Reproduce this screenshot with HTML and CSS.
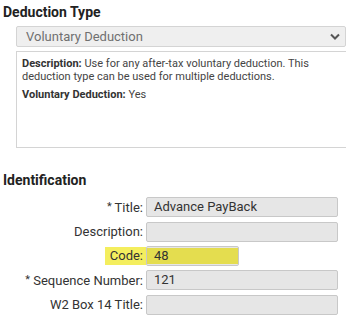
FILE: index.html
```html
<!DOCTYPE html>
<html>
<head>
  <meta charset="UTF-8">
  <title>Deduction</title>
  <link rel="stylesheet" href="styles.css">
</head>
<body>
  <h2 class="section-title">Deduction Type</h2>
  <div class="type-block">
    <div class="select-box">
      <span>Voluntary Deduction</span>
      <svg class="chevron" width="10" height="7" viewBox="0 0 10 7"><path d="M1 1.5 L5 5.5 L9 1.5" fill="none" stroke="#555" stroke-width="2"/></svg>
    </div>
    <div class="desc-box">
      <p><b>Description:</b> Use for any after-tax voluntary deduction. This deduction type can be used for multiple deductions.</p>
      <p><b>Voluntary Deduction:</b> Yes</p>
    </div>
  </div>

  <h2 class="section-title ident">Identification</h2>
  <div class="form-grid">
    <label><span class="req">*</span> Title:</label>
    <div class="field">Advance PayBack</div>

    <label>Description:</label>
    <div class="field"></div>

    <label class="marked"><span>Code:</span></label>
    <div class="field short marked">48</div>

    <label><span class="req">*</span> Sequence Number:</label>
    <div class="field">121</div>

    <label>W2 Box 14 Title:</label>
    <div class="field"></div>
  </div>
</body>
</html>
```

FILE: styles.css
```css
body {
  font-family: Roboto, Arial, sans-serif;
  margin: 0;
  padding: 0 0 0 3px;
  background: white;
  color: #333;
  overflow: hidden;
}
.section-title {
  font-size: 14px;
  line-height: 17px;
  font-weight: bold;
  color: #222;
  margin: 4px 0 0 0;
}
.section-title.ident {
  margin-top: 24px;
}
.type-block {
  margin-left: 13px;
}
.select-box {
  margin-top: 5px;
  width: 319px;
  height: 19px;
  border: 1px solid #d4d4d4;
  border-radius: 2px;
  background: #efefef;
  color: #707070;
  font-size: 13px;
  line-height: 19px;
  padding-left: 9px;
  display: flex;
  align-items: center;
  justify-content: space-between;
  box-sizing: content-box;
}
.chevron {
  margin-right: 5px;
}
.desc-box {
  margin-top: 4px;
  width: 340px;
  height: 90px;
  border: 1px solid #d4d4d4;
  padding: 5px 5px 0 5px;
  font-size: 11px;
  line-height: 13px;
  color: #444;
}
.desc-box p {
  margin: 0 0 5px 0;
  width: 296px;
}
.desc-box b {
  color: #333;
}
.form-grid {
  margin-top: 8px;
  display: grid;
  grid-template-columns: 143px 192px;
  row-gap: 4px;
  font-size: 13px;
}
.form-grid label {
  text-align: right;
  line-height: 20px;
  padding-right: 3px;
  color: #333;
}
.form-grid label.marked {
  display: flex;
  justify-content: flex-end;
  padding-right: 0;
}
.form-grid label.marked span {
  background: #f4ee5e;
  padding: 0 3px 0 5px;
  margin: 1px 0;
  line-height: 18px;
}
.req {
  font-size: 11px;
  vertical-align: 2px;
}
.field {
  height: 18px;
  border: 1px solid #c8c8c8;
  border-radius: 2px;
  background: #e6e6e6;
  line-height: 18px;
  padding-left: 7px;
  color: #333;
}
.field.short {
  width: 84px;
}
.field.marked {
  background: linear-gradient(#e6e6e6 0 1px, #e4dd4f 1px calc(100% - 1px), #e6e6e6 calc(100% - 1px));
}
```
